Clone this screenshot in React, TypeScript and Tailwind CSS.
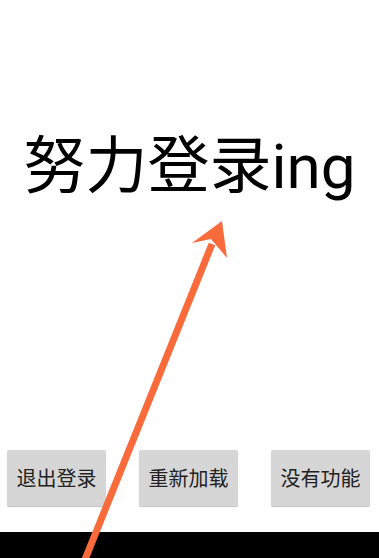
import React from 'react';

const buttons = ['退出登录', '重新加载', '没有功能'];

export default function App() {
  return (
    <div
      className="relative w-[379px] h-[558px] bg-white flex flex-col overflow-hidden"
      style={{ fontFamily: 'Roboto, "Noto Sans CJK SC", sans-serif' }}
    >
      {/* Title */}
      <div className="pt-[136px] flex justify-center">
        <h1 className="text-[62px] leading-[62px] font-normal text-black">
          努力登录ing
        </h1>
      </div>

      <div className="flex-1" />

      {/* Buttons */}
      <div className="flex gap-[33px] pl-[7px] mb-[26px]">
        {buttons.map((label) => (
          <button
            key={label}
            className="w-[99px] h-[56px] pt-[2px] bg-[#d6d6d6] text-[20px] font-normal text-[#222] rounded-[2px] shadow-[0_1px_1px_rgba(0,0,0,0.25)]"
          >
            {label}
          </button>
        ))}
      </div>

      {/* Bottom bar */}
      <div className="h-[26px] bg-black" />

      {/* Arrow overlay */}
      <svg
        className="absolute inset-0 pointer-events-none"
        width="379"
        height="558"
        viewBox="0 0 379 558"
      >
        <line x1="84" y1="562" x2="212" y2="244" stroke="#fa6b3c" strokeWidth="7" />
        <polygon points="222,221 192,243 211,239 227,258" fill="#fa6b3c" />
      </svg>
    </div>
  );
}
